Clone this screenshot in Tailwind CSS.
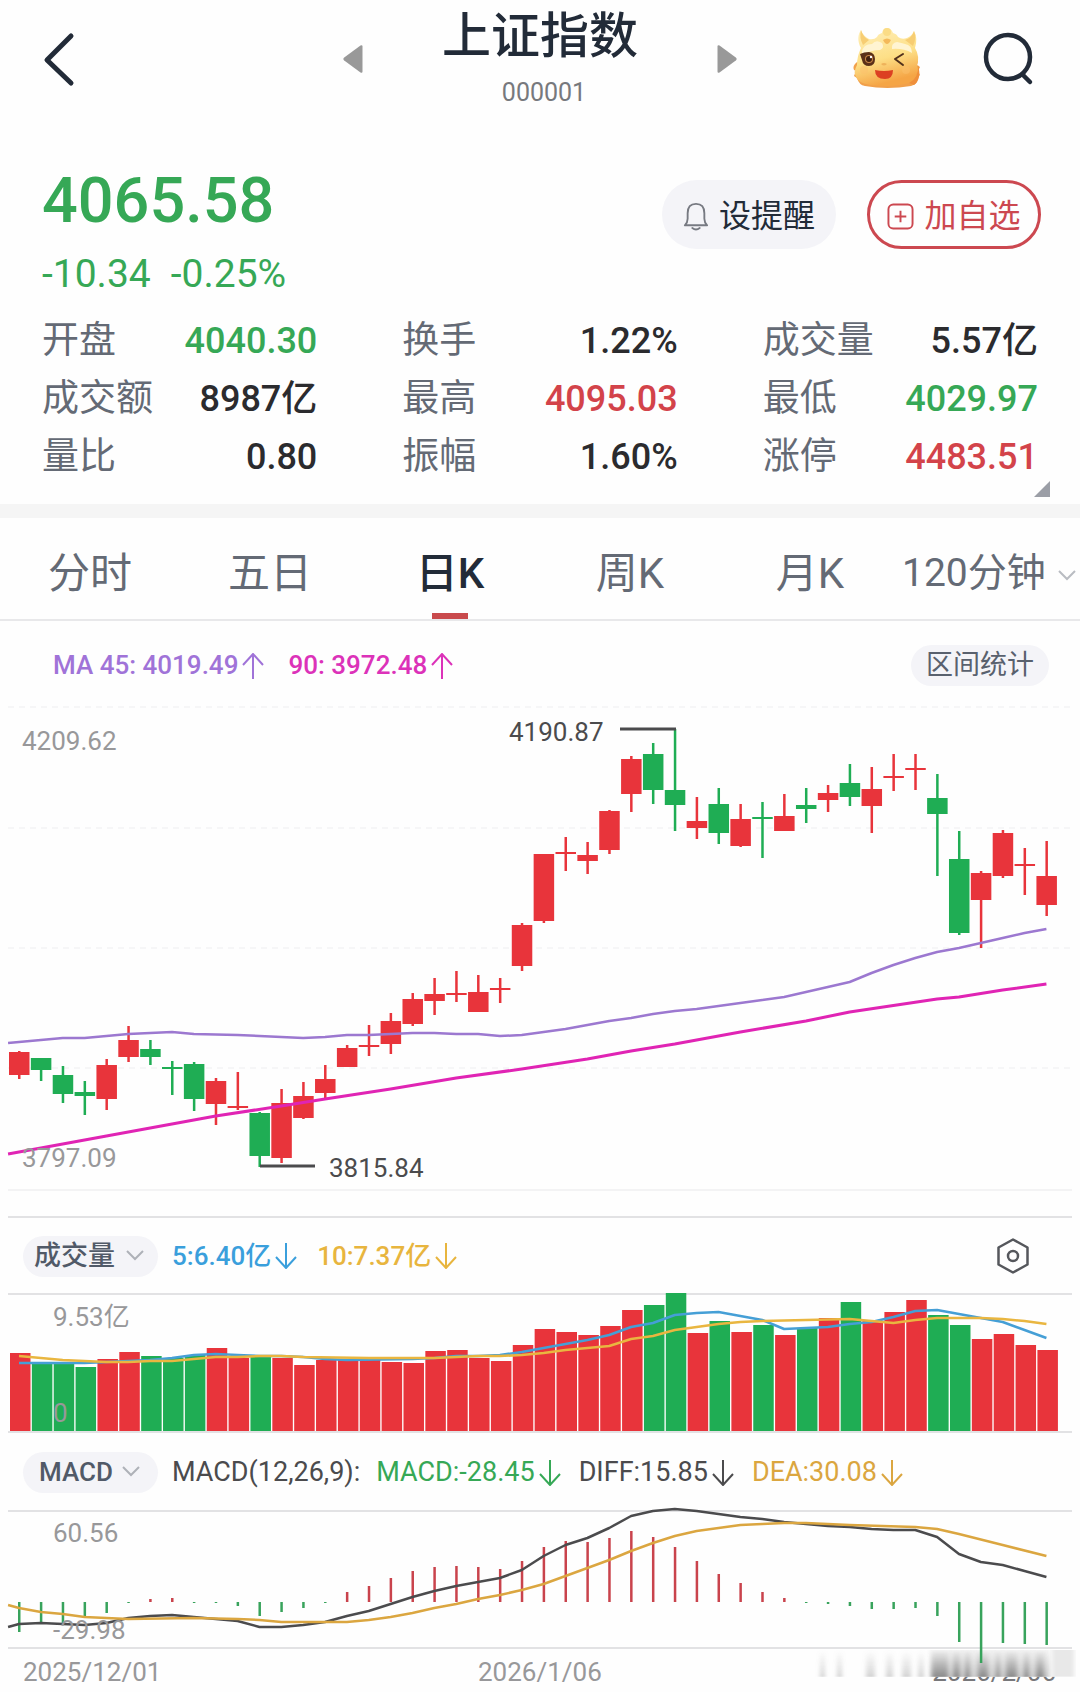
<!DOCTYPE html>
<html lang="zh-CN">
  <head>
    <meta charset="UTF-8" />
    <meta name="viewport" content="width=device-width, initial-scale=1.0" />
    <title>上证指数 000001</title>
    <script src="https://cdn.jsdelivr.net/npm/@tailwindcss/browser@4"></script>
  </head>
  <body
    class="bg-[#fefefe] font-['Roboto','Noto_Sans_CJK_SC',sans-serif] text-[#2b2b2e] overflow-x-hidden"
  >
    <!-- Header -->
    <header class="grid grid-cols-[1fr_auto_1fr] items-center h-[118px]">
      <button type="button" aria-label="返回" class="ml-10 w-10 h-16">
        <svg viewBox="0 0 40 64" class="w-10 h-16" fill="none" stroke="#222b38" stroke-width="5" stroke-linecap="round" stroke-linejoin="round">
          <path d="M31 9 7 33l24 23" />
        </svg>
      </button>
      <div class="w-[394px] flex items-center justify-between">
        <button type="button" aria-label="上一个">
          <svg viewBox="0 0 20 30" class="w-5 h-[30px]" fill="#999">
            <path d="M1.200 13.500 17.500 1.500q2-1 2 1v25q0 2-2 1L1.200 16.500q-1.700-1.500 0-3z" />
          </svg>
        </button>
        <div class="text-center pb-[2px]">
          <h1 class="text-[49px] leading-[70px] font-medium text-[#222b38]">上证指数</h1>
          <p class="text-[25px] leading-[42px] text-[#77797d] pl-2">000001</p>
        </div>
        <button type="button" aria-label="下一个">
          <svg viewBox="0 0 20 30" class="w-5 h-[30px]" fill="#999">
            <path d="M18.800 13.500 2.500 1.500q-2-1-2 1v25q0 2 2 1L18.800 16.500q1.700-1.500 0-3z" />
          </svg>
        </button>
      </div>
      <div class="flex items-center justify-end gap-[60px] pr-[46px]">
        <button type="button" aria-label="助手">
          <svg viewBox="0 0 70 64" class="w-[70px] h-16">
            <defs>
              <linearGradient id="face" x1="0" y1="0" x2="0.3" y2="1">
                <stop offset="0" stop-color="#fff0bd" />
                <stop offset="0.6" stop-color="#fddf86" />
                <stop offset="1" stop-color="#f5a545" />
              </linearGradient>
            </defs>
            <path d="M5 35q-5 4-3 8l2 1-2 5 3 2q2 7 8 8 22 4 46 0 7-2 7-9l2-2-2-4 2-4-3-2 1-4-5-1z" fill="#f1a04a" />
            <path d="M9 21C5 14 6 7 9 3q2 6 8 9 5 1 8-2 1-3 5-4 1-5 5-5t6 5q4 1 5 4 4 3 9 1 5-2 7-7 4 7 1 17 5 8 2 18 3 5 1 11-4 8-32 9Q7 59 4 50q-3-5 1-12 0-9 4-17z" fill="url(#face)" />
            <path d="M9 3q2 7 8 10l-6 5Q7 11 9 3zM62 4q-2 7-9 9l8 6q4-8 1-15z" fill="#f7cd73" />
            <path d="M10 25q1-8 10-8 4-5 10-1 3 5-2 7-9 0-18 5zM40 22q-1-6 5-7 5 1 8 2 7 1 7 9-9-5-20-4z" fill="#fff4d2" />
            <circle cx="35" cy="5" r="4" fill="#fbdc86" />
            <path d="M31 13q4-3 8 0-2 4-4 4t-4-4z" fill="#f4b95a" />
            <path d="M8 27q4-2 9-2 6 1 6 7 0 7-6 7t-7-6z" fill="#5b3018" />
            <circle cx="17" cy="32" r="4" fill="#c78448" />
            <circle cx="17" cy="32" r="3" fill="#42200f" />
            <circle cx="19" cy="30" r="1.200" fill="#fff" />
            <path d="m51 27-8 5 8 6" fill="none" stroke="#51301b" stroke-width="2" stroke-linecap="round" stroke-linejoin="round" />
            <circle cx="12" cy="43" r="4" fill="#fbbf6c" opacity=".5" />
            <circle cx="54" cy="43" r="4" fill="#fbbf6c" opacity=".5" />
            <path d="M29 37q3-2 6 0-3 3-6 0z" fill="#eeb25b" />
            <path d="M23 43q9 2 18 0 0 9-8 9-10 0-10-9z" fill="#dc4022" />
            <path d="M57 56q10-5 9-18 4 14-4 20z" fill="#ef8f3b" />
          </svg>
        </button>
        <button type="button" aria-label="搜索">
          <svg viewBox="0 0 52 56" class="w-[52px] h-14" fill="none" stroke="#222b38" stroke-width="4.500" stroke-linecap="round">
            <circle cx="26" cy="26" r="22" />
            <path d="m41 44 7 7" />
          </svg>
        </button>
      </div>
    </header>

    <!-- Quote -->
    <section class="relative px-[42px] pt-[41px] pb-[17px]">
      <div class="flex justify-between items-start">
        <div class="font-medium text-[#36a856]">
          <p class="text-[63px] leading-[84px]">4065.58</p>
          <p class="flex gap-5 text-[39px] leading-[62px] font-normal">
            <span>-10.34</span><span>-0.25%</span>
          </p>
        </div>
        <div class="flex gap-[31px] pt-[21px] -mr-[3px] text-[32px]">
          <button type="button" class="flex items-center justify-center gap-[10px] w-[174px] h-[69px] pt-[3px] rounded-full bg-[#f4f4f8] text-[#222b38]">
            <svg viewBox="0 0 28 32" class="w-[26px] h-[30px]" fill="none" stroke="#777a82" stroke-width="2" stroke-linecap="round" stroke-linejoin="round">
              <path d="M2 26h24q-3-3-3-7v-6C23 6 19 3 14 3S5 6 5 13v6q0 4-3 7zM10 29q4 3 8 0" />
            </svg>
            设提醒
          </button>
          <button type="button" class="flex items-center justify-center gap-[10px] w-[174px] h-[69px] pt-[3px] rounded-full border-[3px] border-[#cc4850] text-[#cc4850]">
            <svg viewBox="0 0 28 28" class="w-[27px] h-[27px]" fill="none" stroke="currentColor" stroke-width="2">
              <rect x="1.500" y="1.500" width="25" height="25" rx="5" />
              <path d="M8 14h12M14 8v12" />
            </svg>
            加自选
          </button>
        </div>
      </div>

      <dl class="grid grid-cols-3 gap-x-[85px] mt-[7px] pb-px text-[36px] leading-[58px] [&_dt]:text-[37px] [&_dt]:text-[#646a75] [&_dd]:font-medium [&>div]:flex [&>div]:justify-between">
        <div><dt>开盘</dt><dd class="text-[#36a856]">4040.30</dd></div>
        <div><dt>换手</dt><dd>1.22%</dd></div>
        <div><dt>成交量</dt><dd>5.57亿</dd></div>
        <div><dt>成交额</dt><dd>8987亿</dd></div>
        <div><dt>最高</dt><dd class="text-[#d3434a]">4095.03</dd></div>
        <div><dt>最低</dt><dd class="text-[#36a856]">4029.97</dd></div>
        <div><dt>量比</dt><dd>0.80</dd></div>
        <div><dt>振幅</dt><dd>1.60%</dd></div>
        <div><dt>涨停</dt><dd class="text-[#d3434a]">4483.51</dd></div>
      </dl>
      <svg viewBox="0 0 16 16" class="absolute right-[30px] bottom-[7px] w-4 h-4" fill="#9b9ea6">
        <path d="M0 16 16 0v16z" />
      </svg>
    </section>

    <!-- Period tabs -->
    <nav class="grid grid-cols-6 h-[115px] border-t-14 border-[#f5f5f5] text-[42px] text-[#646a75]">
      <button type="button" class="pt-[10px]">分时</button>
      <button type="button" class="pt-[10px]">五日</button>
      <button type="button" class="relative pt-[10px] font-medium text-[#222b38]">
        日K
        <span class="absolute bottom-0 left-1/2 -translate-x-1/2 w-9 h-[6px] bg-[#c94a4c]"></span>
      </button>
      <button type="button" class="pt-[10px]">周K</button>
      <button type="button" class="pt-[10px]">月K</button>
      <div class="relative pt-[10px] flex items-center">
        <select aria-label="分钟周期" class="appearance-none w-full text-[39px] bg-transparent pl-[2px]">
          <option>120分钟</option>
        </select>
        <svg viewBox="0 0 18 12" class="absolute right-1 top-[52px] w-[18px] h-3 pointer-events-none" fill="none" stroke="#b9bcc2" stroke-width="2">
          <path d="m1 1 8 8 8-8" />
        </svg>
      </div>
    </nav>

    <!-- Daily candles -->
    <div class="flex items-center justify-between h-[81px] pt-[10px] pl-[53px] pr-[31px] border-t-2 border-[#e8e8ea]">
      <div class="flex gap-6 text-[26px] font-medium">
        <span class="flex items-center gap-1 text-[#a073d8]">MA 45: 4019.49
          <svg viewBox="0 0 22 26" class="w-[22px] h-[26px]" fill="none" stroke="currentColor" stroke-width="2"><path d="M11 26V1M1 12 11 1l10 11" /></svg>
        </span>
        <span class="flex items-center gap-1 text-[#dc32b9]">90: 3972.48
          <svg viewBox="0 0 22 26" class="w-[22px] h-[26px]" fill="none" stroke="currentColor" stroke-width="2"><path d="M11 26V1M1 12 11 1l10 11" /></svg>
        </span>
      </div>
      <button type="button" class="w-[138px] h-[41px] rounded-full bg-[#f4f4f8] text-[27px] leading-[41px] text-[#59616e]">区间统计</button>
    </div>
    <svg id="candle-chart" viewBox="0 0 1080 516" class="block w-full" font-size="26" role="img" aria-label="日K线"></svg>

    <!-- Volume -->
    <div class="mx-2 flex items-center justify-between h-[74px] pt-1 pl-[15px] pr-[43px] border-t-2 border-[#e2e2e4]">
      <div class="flex items-center text-[26px] font-medium">
        <div class="relative mr-[14px]">
          <select aria-label="成交量指标" class="block appearance-none w-[135px] h-[41px] pl-[11px] rounded-full bg-[#f4f4f8] text-[27px] text-[#515a68]">
            <option>成交量</option>
          </select>
          <svg viewBox="0 0 18 12" class="absolute right-[14px] top-[14px] w-[18px] h-3 pointer-events-none" fill="none" stroke="#aeb1b8" stroke-width="2"><path d="m1 1 8 8 8-8" /></svg>
        </div>
        <span class="flex items-center gap-1 mr-5 text-[#3a9fdc]">5:6.40亿
          <svg viewBox="0 0 22 26" class="w-[22px] h-[26px]" fill="none" stroke="currentColor" stroke-width="2"><path d="M11 0v25M1 14l10 11 10-11" /></svg>
        </span>
        <span class="flex items-center gap-1 text-[#e8b53e]">10:7.37亿
          <svg viewBox="0 0 22 26" class="w-[22px] h-[26px]" fill="none" stroke="currentColor" stroke-width="2"><path d="M11 0v25M1 14l10 11 10-11" /></svg>
        </span>
      </div>
      <button type="button" aria-label="指标设置">
        <svg viewBox="0 0 32 36" class="w-8 h-9" fill="none" stroke="#55575c" stroke-width="2.500" stroke-linejoin="round">
          <path d="M16 1.500 30.500 9.500v17L16 34.500 1.500 26.500v-17z" />
          <circle cx="16" cy="18" r="5" />
        </svg>
      </button>
    </div>
    <svg id="volume-chart" viewBox="0 0 1080 146" class="block w-full" font-size="26" role="img" aria-label="成交量"></svg>

    <!-- MACD -->
    <div class="flex items-center h-[69px] pt-1 pl-[23px] text-[27px] whitespace-nowrap">
      <div class="relative mr-[14px]">
        <select aria-label="MACD指标" class="block appearance-none w-[135px] h-[41px] pl-4 rounded-full bg-[#f4f4f8] text-[26px] font-medium text-[#515a68]">
          <option>MACD</option>
        </select>
        <svg viewBox="0 0 18 12" class="absolute right-[18px] top-[14px] w-[18px] h-3 pointer-events-none" fill="none" stroke="#aeb1b8" stroke-width="2"><path d="m1 1 8 8 8-8" /></svg>
      </div>
      <span class="mr-4 text-[#4b4b4d]">MACD(12,26,9):</span>
      <span class="flex items-center gap-1 mr-[18px] text-[#36a856]">MACD:-28.45
        <svg viewBox="0 0 22 26" class="w-[22px] h-[26px]" fill="none" stroke="currentColor" stroke-width="2"><path d="M11 0v25M1 14l10 11 10-11" /></svg>
      </span>
      <span class="flex items-center gap-1 mr-[18px] text-[#4b4b4d]">DIFF:15.85
        <svg viewBox="0 0 22 26" class="w-[22px] h-[26px]" fill="none" stroke="currentColor" stroke-width="2"><path d="M11 0v25M1 14l10 11 10-11" /></svg>
      </span>
      <span class="flex items-center gap-1 text-[#dba640]">DEA:30.08
        <svg viewBox="0 0 22 26" class="w-[22px] h-[26px]" fill="none" stroke="currentColor" stroke-width="2"><path d="M11 0v25M1 14l10 11 10-11" /></svg>
      </span>
    </div>
    <svg id="macd-chart" viewBox="0 0 1080 145" class="relative z-10 block w-full overflow-visible" font-size="26" role="img" aria-label="MACD"></svg>

    <!-- Date axis -->
    <div class="relative grid grid-cols-[455px_1fr_auto] h-[42px] pl-[23px] pr-6 text-[26px] leading-[44px] text-[#98989a]">
      <span>2025/12/01</span>
      <span>2026/1/06</span>
      <span class="text-[#77777a]">2026/2/06</span>
      <!-- Soft streaks over the last date -->
      <svg viewBox="0 0 270 36" class="absolute right-0 top-0 w-[270px] h-[30px]" preserveAspectRatio="none" aria-hidden="true">
        <defs>
          <linearGradient id="streak" x1="0" y1="0" x2="0" y2="1">
            <stop offset="0" stop-color="#999" stop-opacity="0" />
            <stop offset="1" stop-color="#808080" stop-opacity="0.85" />
          </linearGradient>
          <filter id="soften" x="-5%" y="-5%" width="110%" height="110%">
            <feGaussianBlur stdDeviation="2 0" />
          </filter>
          <linearGradient id="veil" x1="0" y1="0" x2="0" y2="1">
            <stop offset="0" stop-color="#f2f2f2" stop-opacity="0.9" />
            <stop offset="1" stop-color="#c8c8c8" stop-opacity="0.9" />
          </linearGradient>
        </defs>
        <path d="M0 0h270v32H0z" fill="#fefefe" />
        <path d="M120 0h120v32H120z" fill="url(#veil)" filter="url(#soften)" />
        <g fill="url(#streak)" filter="url(#soften)">
          <path d="M10 0h5v32h-5zM27 0h5v32h-5zM56 0h9v32h-9zM76 0h7v32h-7zM92 0h9v32h-9zM108 0h6v32h-6z" opacity=".4" />
          <path d="M122 0h16v32h-16zM143 0h7v32h-7zM155 0h5v32h-5zM168 0h10v32h-10zM186 0h4v32h-4zM196 0h11v32h-11zM214 0h5v32h-5zM226 0h8v32h-8z" />
        </g>
        <path d="M242 0h22v32h-22z" fill="#e8e8e8" filter="url(#soften)" />
      </svg>
    </div>

    <script>
      const RED = "#e8343b";
      const GREEN = "#1fad54";
      const STEP = 21.86;
      const FIRST = 19;

      // body top, body bottom, wick top, wick bottom, up (1) or down (0)
      const candles = [
        [352, 375, 351, 379, 1], [358, 370, 358, 381, 0], [375, 394, 366, 403, 0],
        [392, 396, 381, 415, 0], [365, 399, 359, 410, 1], [340, 357, 326, 362, 1],
        [349, 357, 340, 365, 0], [367, 369, 361, 395, 0], [364, 399, 362, 411, 0],
        [381, 404, 378, 425, 1], [406, 408, 372, 410, 1], [413, 456, 412, 467, 0],
        [403, 458, 389, 463, 1], [396, 418, 382, 419, 1], [379, 393, 365, 399, 1],
        [348, 367, 345, 367, 1], [345, 347, 325, 356, 1], [321, 344, 313, 354, 1],
        [299, 324, 293, 326, 1], [294, 301, 278, 315, 1], [293, 295, 271, 302, 1],
        [292, 312, 275, 312, 1], [288, 290, 278, 303, 1], [225, 266, 223, 271, 1],
        [154, 221, 154, 223, 1], [152, 154, 137, 171, 1], [155, 161, 142, 174, 1],
        [111, 150, 110, 154, 1], [59, 94, 56, 112, 1], [54, 90, 43, 104, 0],
        [90, 105, 29, 131, 0], [121, 128, 97, 139, 1], [104, 133, 88, 144, 0],
        [119, 146, 104, 147, 1], [117, 119, 102, 158, 0], [116, 131, 94, 131, 1],
        [105, 109, 88, 123, 0], [93, 100, 85, 112, 1], [83, 97, 64, 106, 0],
        [89, 106, 67, 133, 1], [76, 78, 54, 91, 1], [68, 70, 54, 90, 1],
        [98, 114, 74, 176, 0], [159, 233, 131, 235, 0], [173, 200, 171, 248, 1],
        [133, 176, 130, 178, 1], [164, 166, 148, 195, 1], [176, 205, 141, 216, 1],
      ];

      // [candle index, y] points; -0.5 is the left edge of the plot
      const ma45 = [[-0.5, 343], [1, 340], [2, 338], [3, 338], [4, 336], [5, 334], [6, 333], [7, 332], [8, 334], [10, 335], [11, 336], [12, 337], [13, 338], [14, 337], [15, 335], [16, 335], [17, 334], [18, 333], [19, 333], [20, 334], [21, 334], [22, 336], [23, 335], [24, 332], [25, 329], [26, 325], [27, 321], [28, 318], [29, 314], [30, 311], [31, 309], [32, 306], [33, 303], [34, 300], [35, 297], [36, 292], [37, 287], [38, 282], [39, 273], [40, 265], [41, 258], [42, 252], [43, 248], [44, 243], [45, 238], [46, 233], [47, 229]];
      const ma90 = [[-0.5, 454], [4, 436], [9, 416], [12, 406], [14, 399], [17, 389], [20, 378], [23, 369], [26, 359], [28, 351], [30, 344], [33, 332], [36, 321], [38, 312], [42, 299], [43, 297], [45, 290], [47, 284]];

      const volumes = [63, 74, 73, 77, 69, 62, 66, 68, 65, 58, 68, 67, 68, 75, 70, 70, 70, 72, 73, 61, 60, 68, 71, 55, 39, 42, 45, 36, 20, 15, 3, 43, 31, 42, 35, 45, 38, 28, 12, 31, 22, 10, 25, 35, 49, 44, 55, 60];
      const vol5 = [[0, 73], [3, 73], [4, 72], [5, 71], [6, 70], [7, 68], [8, 65], [9, 64], [10, 65], [11, 66], [12, 66], [13, 67], [14, 69], [15, 70], [18, 69], [19, 68], [20, 66], [21, 66], [22, 65], [23, 62], [24, 58], [25, 54], [26, 50], [27, 45], [28, 37], [29, 33], [30, 25], [31, 23], [32, 22], [33, 26], [34, 30], [35, 39], [36, 38], [37, 37], [38, 34], [39, 32], [40, 27], [41, 21], [42, 20], [43, 24], [44, 28], [45, 32], [46, 40], [47, 48]];
      const vol10 = [[0, 66], [1, 68], [2, 70], [3, 71], [4, 72], [5, 72], [6, 71], [7, 71], [8, 69], [9, 67], [10, 67], [11, 66], [12, 66], [13, 67], [16, 68], [18, 68], [19, 68], [21, 66], [22, 66], [23, 65], [24, 63], [25, 60], [26, 58], [27, 56], [28, 49], [29, 46], [30, 40], [31, 37], [32, 34], [33, 32], [34, 31], [36, 30], [38, 29], [39, 31], [40, 33], [41, 30], [42, 28], [44, 28], [45, 29], [46, 31], [47, 34]];

      const MACD_ZERO = 97;
      const macd = [127, 117, 118, 113, 108, 98, 94, 93, 98, 98, 101, 111, 107, 103, 98, 87, 81, 73, 66, 62, 61, 62, 64, 56, 42, 36, 37, 33, 26, 32, 42, 56, 69, 78, 87, 93, 98, 99, 101, 104, 104, 103, 111, 137, 158, 138, 139, 140];
      const diff = [[-0.5, 122], [0, 119], [1, 118], [2, 119], [3, 120], [4, 118], [5, 113], [6, 111], [7, 110], [8, 112], [9, 114], [10, 116], [11, 122], [12, 122], [13, 120], [14, 117], [15, 111], [16, 106], [17, 99], [18, 92], [19, 86], [20, 81], [21, 77], [22, 73], [23, 65], [24, 51], [25, 40], [26, 33], [27, 23], [28, 11], [29, 6], [30, 4], [31, 6], [32, 9], [33, 12], [34, 14], [35, 17], [36, 19], [37, 21], [38, 22], [39, 24], [40, 25], [41, 25], [42, 32], [43, 49], [44, 57], [45, 60], [46, 66], [47, 72]];
      const dea = [[-0.5, 100], [0, 103], [1, 107], [2, 109], [3, 112], [4, 113], [5, 114], [8, 113], [10, 114], [11, 115], [12, 117], [15, 117], [16, 115], [17, 112], [18, 108], [19, 103], [20, 99], [21, 94], [22, 90], [23, 85], [24, 79], [25, 71], [26, 63], [27, 55], [28, 46], [29, 38], [30, 31], [31, 26], [32, 23], [33, 20], [34, 19], [35, 18], [36, 18], [38, 20], [41, 22], [42, 24], [43, 29], [45, 40], [47, 51]];

      const xAt = (i) => FIRST + i * STEP;

      function rect(x, y, w, h, fill) {
        return `<rect x="${x}" y="${y}" width="${w}" height="${h}" fill="${fill}"/>`;
      }

      function polyline(points, color, width) {
        const list = points.map(([i, y]) => `${xAt(i)},${y}`).join(" ");
        return `<polyline points="${list}" fill="none" stroke="${color}" stroke-width="${width}" stroke-linejoin="round"/>`;
      }

      function rule(y, color, dash) {
        return `<path d="M8 ${y}H1072" stroke="${color}" stroke-width="2" stroke-dasharray="${dash || "none"}"/>`;
      }

      function label(x, y, text, color) {
        return `<text x="${x}" y="${y}" fill="${color}">${text}</text>`;
      }

      // Candles with both moving averages and the high / low callouts
      function drawCandles() {
        let out = [7, 128, 248, 368].map((y) => rule(y, "#f6f6f7", "6 5")).join("");
        out += rule(490, "#f3f3f4");
        candles.forEach(([top, bottom, high, low, up], i) => {
          const color = up ? RED : GREEN;
          out += rect(xAt(i) - 1, high, 2.5, low - high, color);
          out += rect(xAt(i) - 10, top, 20.5, Math.max(bottom - top, 2), color);
        });
        out += polyline(ma45, "#9c78d0", 2.5) + polyline(ma90, "#e024b4", 3);
        out += `<path d="M620 29H676M260 466H315" stroke="#4b4b4d" stroke-width="3"/>`;
        out += label(22, 50, "4209.62", "#98989a") + label(22, 467, "3797.09", "#98989a");
        out += label(509, 41, "4190.87", "#4b4b4d") + label(329, 477, "3815.84", "#4b4b4d");
        document.getElementById("candle-chart").innerHTML = out;
      }

      function drawVolume() {
        let out = rule(4, "#e2e2e4") + rule(142, "#e2e2e4");
        volumes.forEach((top, i) => {
          out += rect(xAt(i) - 9, top, 20.5, 141 - top, candles[i][4] ? RED : GREEN);
        });
        out += polyline(vol5, "#459fd6", 2.5) + polyline(vol10, "#e9b640", 2.5);
        out += label(53, 36, "9.53亿", "#98989a") + label(53, 132, "0", "#98989a");
        document.getElementById("volume-chart").innerHTML = out;
      }

      function drawMacd() {
        let out = rule(6, "#e2e2e4") + rule(143, "#e2e2e4");
        macd.forEach((y, i) => {
          const top = Math.min(y, MACD_ZERO);
          const color = y < MACD_ZERO ? "#c9434c" : "#38a35c";
          out += rect(xAt(i) - 1, top, 2.5, Math.abs(y - MACD_ZERO), color);
        });
        out += polyline(diff, "#4b4b4d", 2.5) + polyline(dea, "#dba640", 2.5);
        out += label(53, 37, "60.56", "#98989a") + label(53, 134, "-29.98", "#98989a");
        document.getElementById("macd-chart").innerHTML = out;
      }

      drawCandles();
      drawVolume();
      drawMacd();
    </script>
  </body>
</html>
